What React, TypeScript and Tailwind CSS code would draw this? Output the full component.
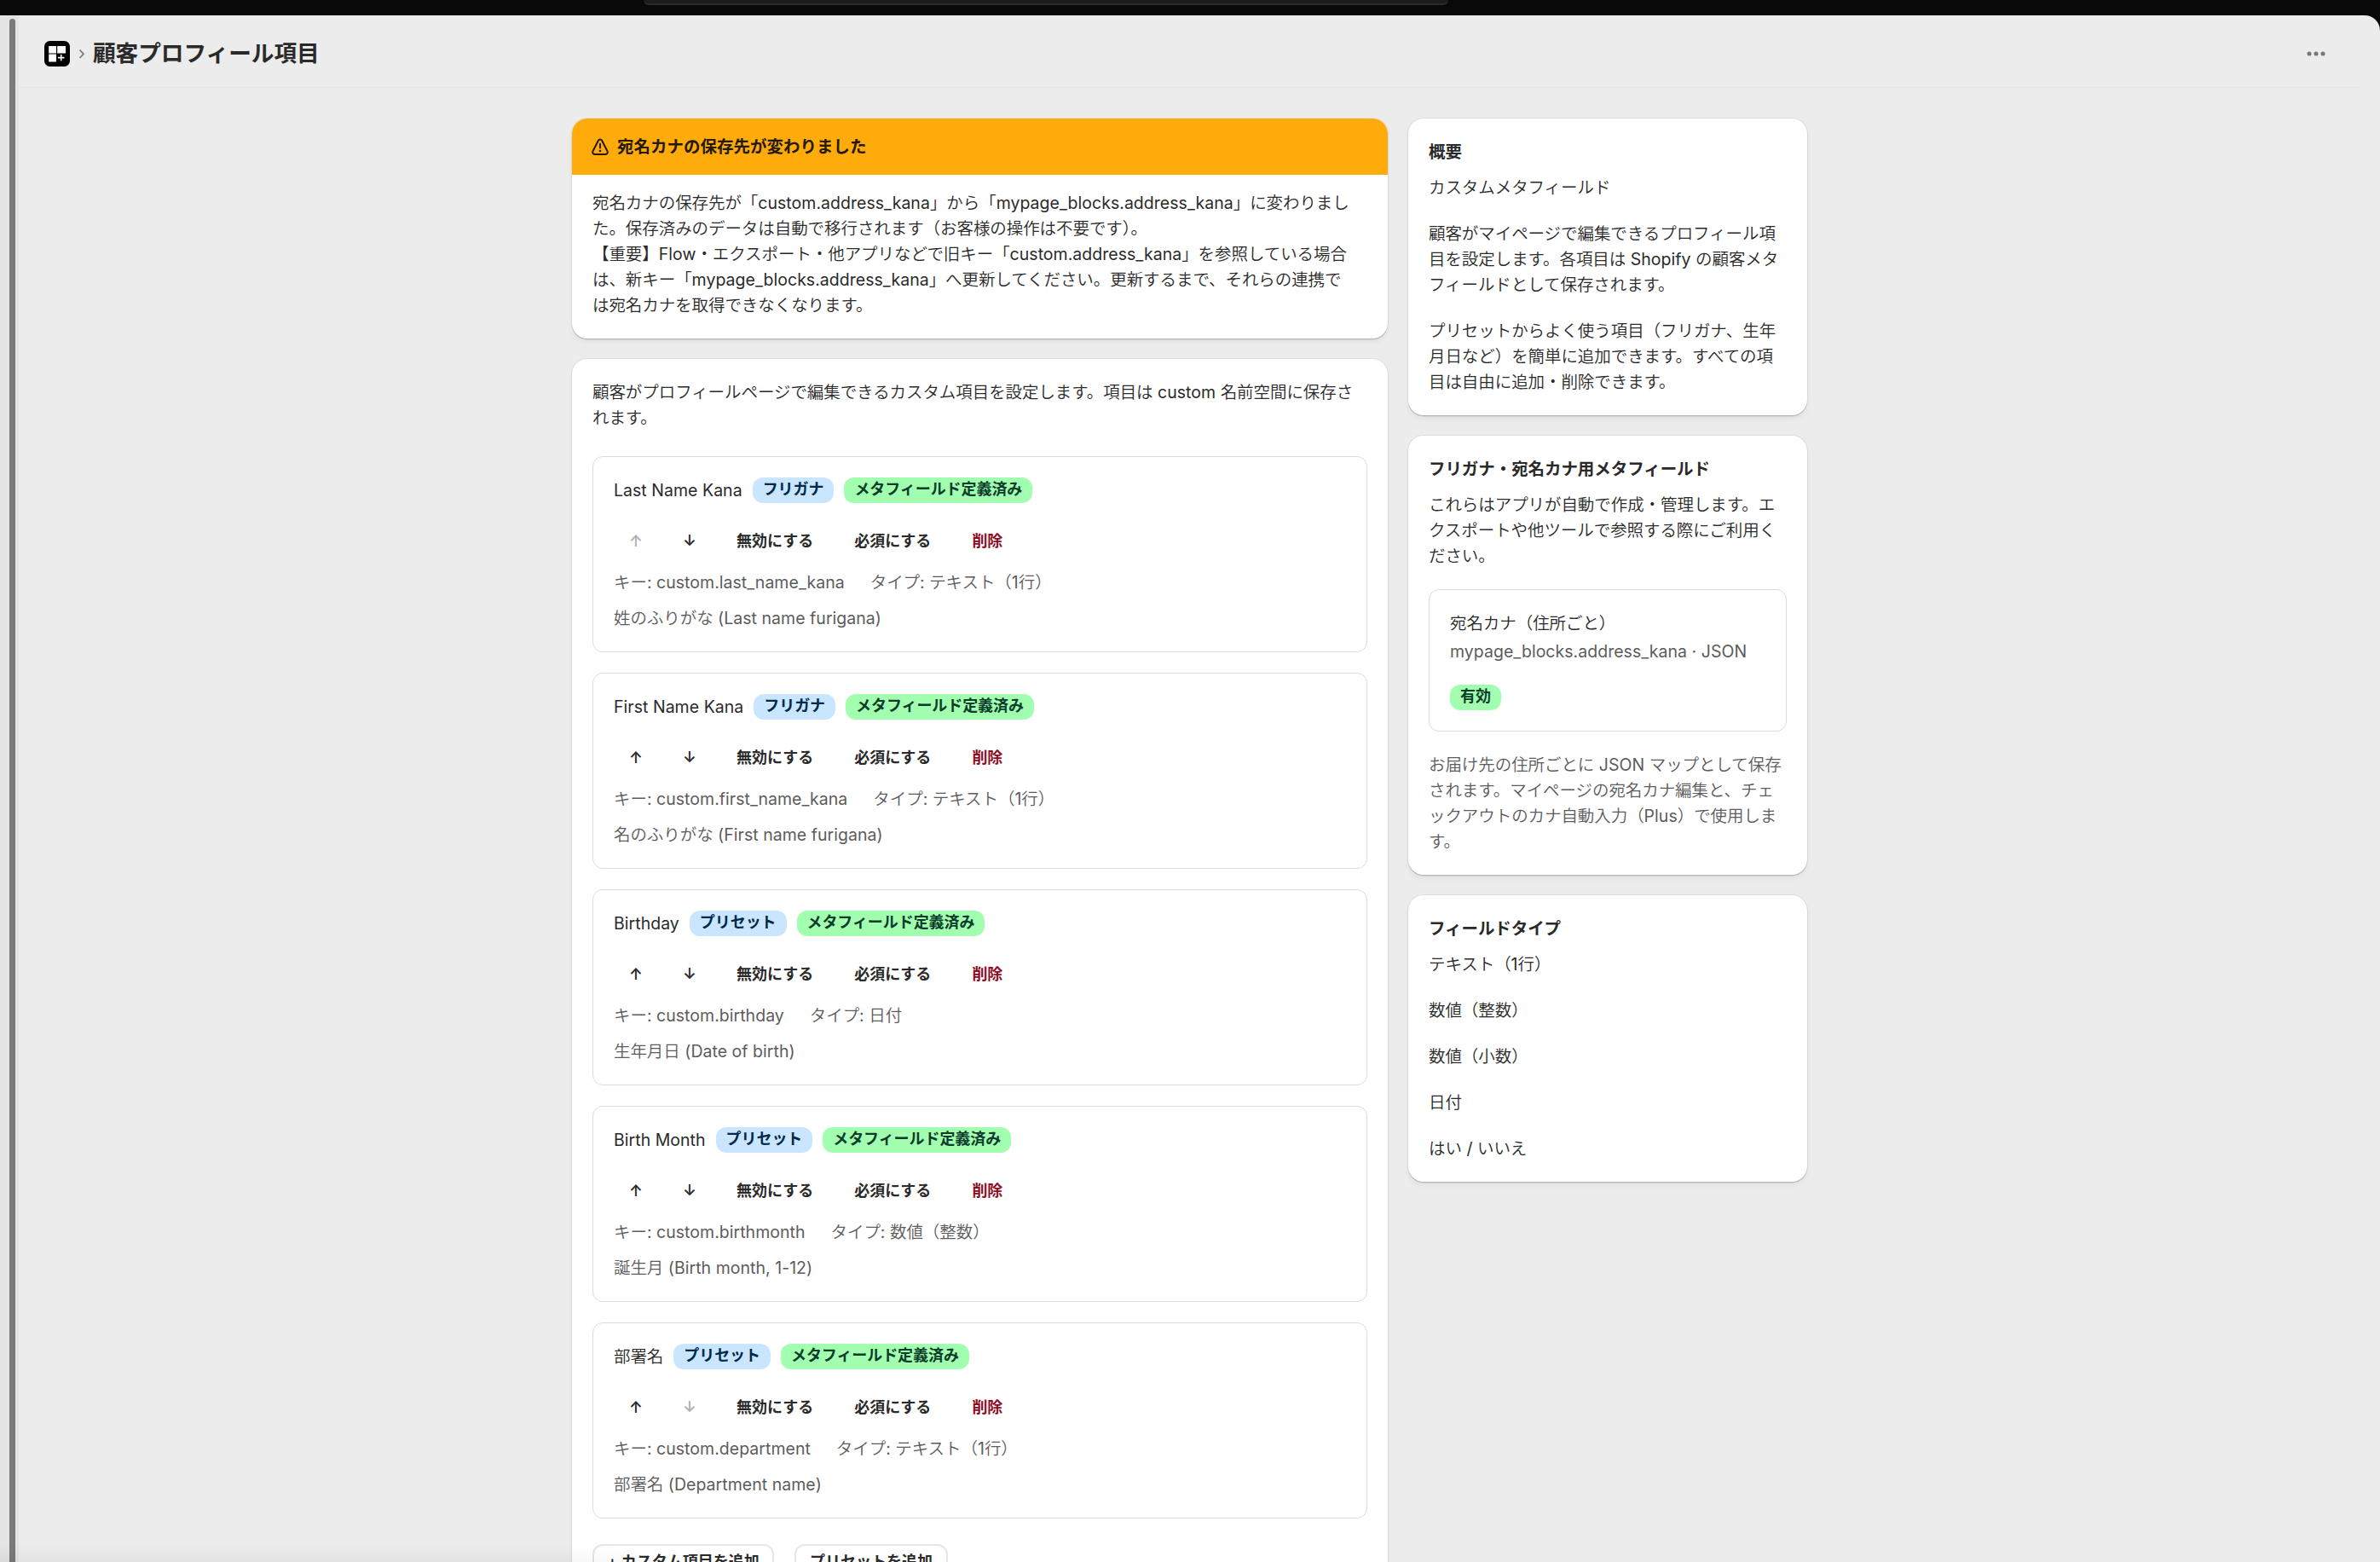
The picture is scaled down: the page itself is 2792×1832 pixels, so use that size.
import { Fragment, type ReactNode } from "react";

type Field = {
  name: string;
  tag: string;
  fieldKey: string;
  type: string;
  description: string;
};

const fields: Field[] = [
  {
    name: "Last Name Kana",
    tag: "フリガナ",
    fieldKey: "custom.last_name_kana",
    type: "テキスト（1行）",
    description: "姓のふりがな (Last name furigana)",
  },
  {
    name: "First Name Kana",
    tag: "フリガナ",
    fieldKey: "custom.first_name_kana",
    type: "テキスト（1行）",
    description: "名のふりがな (First name furigana)",
  },
  {
    name: "Birthday",
    tag: "プリセット",
    fieldKey: "custom.birthday",
    type: "日付",
    description: "生年月日 (Date of birth)",
  },
  {
    name: "Birth Month",
    tag: "プリセット",
    fieldKey: "custom.birthmonth",
    type: "数値（整数）",
    description: "誕生月 (Birth month, 1-12)",
  },
  {
    name: "部署名",
    tag: "プリセット",
    fieldKey: "custom.department",
    type: "テキスト（1行）",
    description: "部署名 (Department name)",
  },
];

const fieldTypes = [
  "テキスト（1行）",
  "数値（整数）",
  "数値（小数）",
  "日付",
  "はい / いいえ",
];

// Latin runs are set slightly heavier than the Japanese around them.
function Mixed({ text }: { text: string }) {
  return text.split(/([\x20-\x7e·]+)/).map((part, index) =>
    index % 2 === 1 ? (
      <span key={index} className="font-normal tracking-[0.03px]">
        {part}
      </span>
    ) : (
      part
    ),
  );
}

function Copy({ lines, className = "" }: { lines: string[]; className?: string }) {
  return (
    <p className={className}>
      {lines.map((line, index) => (
        <Fragment key={line}>
          {index > 0 && <br />}
          <Mixed text={line} />
        </Fragment>
      ))}
    </p>
  );
}

function AppLogo() {
  return (
    <svg width="30" height="30" viewBox="0 0 30 30">
      <rect width="30" height="30" rx="6.5" fill="#000" />
      <path d="M5.2 6h8.8v8.6H5.2zM15.2 6H25v8.6h-9.8zM5.2 15.6h8.8v8.8H5.2z" fill="#fff" />
      <path d="M19.7 15.9v7.4M16 19.6h7.4" stroke="#fff" strokeWidth="1.6" />
    </svg>
  );
}

function WarningIcon() {
  return (
    <svg
      width="20"
      height="21"
      viewBox="0 0 20 21"
      fill="none"
      stroke="currentColor"
      strokeWidth="2"
      strokeLinecap="round"
      strokeLinejoin="round"
    >
      <path d="M8.1 2.5a2.2 2.2 0 0 1 3.8 0l6.6 12.7c.8 1.7-.1 3.8-2.2 3.8H3.7c-2.1 0-3-2.1-2.2-3.8z" />
      <path d="M10 6.8v4.6" />
      <path d="M10 15v.1" strokeWidth="2.6" />
    </svg>
  );
}

function Badge({ tone, children }: { tone: "info" | "success"; children: ReactNode }) {
  return (
    <span
      className={`flex h-[30px] items-center rounded-[12px] px-3 pb-0.5 text-[18px] font-semibold ${
        tone === "info" ? "bg-[#cae6ff] text-[#00294a]" : "bg-[#a3ffb0] text-[#0c3d2c]"
      }`}
    >
      {children}
    </span>
  );
}

function Card({ className = "", children }: { className?: string; children: ReactNode }) {
  return (
    <section
      className={`rounded-[18px] bg-white shadow-[0_0_0_1px_rgba(0,0,0,0.06),0_1.5px_0_rgba(0,0,0,0.13),0_4px_6px_rgba(0,0,0,0.05)] ${className}`}
    >
      {children}
    </section>
  );
}

function FieldCard({ field, isFirst, isLast }: { field: Field; isFirst: boolean; isLast: boolean }) {
  return (
    <div className="h-[230px] rounded-[12px] border border-[#dcdcdc] p-6">
      <div className="flex items-center gap-3">
        <span>
          <Mixed text={field.name} />
        </span>
        <Badge tone="info">{field.tag}</Badge>
        <Badge tone="success">メタフィールド定義済み</Badge>
      </div>

      <div className="mt-6 flex h-[42px] items-center gap-12 px-[18px] text-[18px] font-semibold tracking-normal">
        <button type="button" className={`w-[15px] ${isFirst ? "text-[#b0b0b0]" : ""}`}>
          ↑
        </button>
        <button type="button" className={`w-[15px] ${isLast ? "text-[#b0b0b0]" : ""}`}>
          ↓
        </button>
        <button type="button">無効にする</button>
        <button type="button">必須にする</button>
        <button type="button" className="text-[#8e0b21]">
          削除
        </button>
      </div>

      <div className="mt-3 flex gap-[30px] text-[#5c5c5c]">
        <span>
          <Mixed text={`キー: ${field.fieldKey}`} />
        </span>
        <span>
          <Mixed text={`タイプ: ${field.type}`} />
        </span>
      </div>
      <Copy className="mt-3 text-[#5c5c5c]" lines={[field.description]} />
    </div>
  );
}

export default function App() {
  return (
    <div className="relative h-[1832px] w-[2792px] overflow-hidden bg-[#090909] font-[Inter,'Noto_Sans_CJK_JP',sans-serif] text-[19.5px] leading-[30px] font-[350] tracking-[-0.07px] text-[#2a2a2a]">
      <div className="h-[18px] pl-[755px]">
        <div className="h-1.5 w-[944px] rounded-b-[8px] border-b-2 border-[#2b2b2b] bg-[#1c1c1c]" />
      </div>

      <div className="flex h-[1814px] overflow-hidden rounded-tr-[18px] bg-[#ececec]">
        <div className="w-[22px] shrink-0 bg-[#e4e4e4] pt-1 pl-[11px]">
          <div className="h-[1830px] w-[7px] rounded-full bg-[#7a7a7a]" />
        </div>

        <main className="grow">
          <header className="mr-6 flex h-[85px] items-center border-b border-[#e3e3e3] pt-1.5 pl-[30px]">
            <div className="flex grow items-center">
              <AppLogo />
              <svg className="ml-[10px]" width="8" height="14" viewBox="0 0 8 14" fill="none">
                <path d="M1.5 2.5l4.5 4.8-4.5 4.7" stroke="#7c7c7c" strokeWidth="1.8" />
              </svg>
              <h1 className="ml-[9px] pb-0.5 text-[26.7px] font-semibold">顧客プロフィール項目</h1>
            </div>
            <button type="button" className="mr-[40px] text-[#757575]">
              <svg width="22" height="6" viewBox="0 0 22 6" fill="currentColor">
                <circle cx="3" cy="3" r="2.5" />
                <circle cx="11" cy="3" r="2.5" />
                <circle cx="19" cy="3" r="2.5" />
              </svg>
            </button>
          </header>

          <div className="flex items-start gap-6 pt-9 pl-[649px]">
            <div className="flex w-[957px] shrink-0 flex-col gap-6">
              <Card className="overflow-hidden">
                <div className="flex h-[66px] items-center gap-[10px] bg-[#ffab0c] px-[23px] text-[#251a00]">
                  <WarningIcon />
                  <h2 className="font-semibold tracking-normal">宛名カナの保存先が変わりました</h2>
                </div>
                <div className="px-6 pt-[18px] pb-6">
                  <Copy
                    lines={[
                      "宛名カナの保存先が「custom.address_kana」から「mypage_blocks.address_kana」に変わりまし",
                      "た。保存済みのデータは自動で移行されます（お客様の操作は不要です）。",
                      "【重要】Flow・エクスポート・他アプリなどで旧キー「custom.address_kana」を参照している場合",
                      "は、新キー「mypage_blocks.address_kana」へ更新してください。更新するまで、それらの連携で",
                      "は宛名カナを取得できなくなります。",
                    ]}
                  />
                </div>
              </Card>

              <Card className="p-6">
                <Copy
                  lines={[
                    "顧客がプロフィールページで編集できるカスタム項目を設定します。項目は custom 名前空間に保存さ",
                    "れます。",
                  ]}
                />
                <div className="mt-[30px] flex flex-col gap-6">
                  {fields.map((field, index) => (
                    <FieldCard
                      key={field.fieldKey}
                      field={field}
                      isFirst={index === 0}
                      isLast={index === fields.length - 1}
                    />
                  ))}
                </div>
                <div className="mt-[30px] flex gap-6 text-[18px] font-semibold tracking-normal">
                  <button type="button" className="h-[42px] w-[213px] rounded-[12px] border-2 border-[#e6e6e6]">
                    + カスタム項目を追加
                  </button>
                  <button type="button" className="h-[42px] w-[180px] rounded-[12px] border-2 border-[#e6e6e6]">
                    プリセットを追加
                  </button>
                </div>
              </Card>
            </div>

            <aside className="flex w-[468px] shrink-0 flex-col gap-6">
              <Card className="p-6">
                <h2 className="font-semibold">概要</h2>
                <Copy className="mt-3" lines={["カスタムメタフィールド"]} />
                <Copy
                  className="mt-6"
                  lines={[
                    "顧客がマイページで編集できるプロフィール項",
                    "目を設定します。各項目は Shopify の顧客メタ",
                    "フィールドとして保存されます。",
                  ]}
                />
                <Copy
                  className="mt-6"
                  lines={[
                    "プリセットからよく使う項目（フリガナ、生年",
                    "月日など）を簡単に追加できます。すべての項",
                    "目は自由に追加・削除できます。",
                  ]}
                />
              </Card>

              <Card className="p-6">
                <h2 className="font-semibold">フリガナ・宛名カナ用メタフィールド</h2>
                <Copy
                  className="mt-3"
                  lines={[
                    "これらはアプリが自動で作成・管理します。エ",
                    "クスポートや他ツールで参照する際にご利用く",
                    "ださい。",
                  ]}
                />
                <div className="mt-6 flex h-[167px] flex-col items-start rounded-[12px] border border-[#dcdcdc] p-6">
                  <Copy lines={["宛名カナ（住所ごと）"]} />
                  <Copy className="mt-[3px] mb-6 text-[#5c5c5c]" lines={["mypage_blocks.address_kana · JSON"]} />
                  <Badge tone="success">有効</Badge>
                </div>
                <Copy
                  className="mt-6 text-[#5c5c5c]"
                  lines={[
                    "お届け先の住所ごとに JSON マップとして保存",
                    "されます。マイページの宛名カナ編集と、チェ",
                    "ックアウトのカナ自動入力（Plus）で使用しま",
                    "す。",
                  ]}
                />
              </Card>

              <Card className="p-6">
                <h2 className="font-semibold">フィールドタイプ</h2>
                <ul className="mt-3 flex flex-col gap-6">
                  {fieldTypes.map((type) => (
                    <li key={type}>
                      <Mixed text={type} />
                    </li>
                  ))}
                </ul>
              </Card>
            </aside>
          </div>
        </main>
      </div>

      <div className="pointer-events-none absolute bottom-0 left-0 h-5 w-[800px] bg-gradient-to-t from-black/4 to-transparent [mask-image:linear-gradient(to_right,black_80%,transparent)]" />
    </div>
  );
}
